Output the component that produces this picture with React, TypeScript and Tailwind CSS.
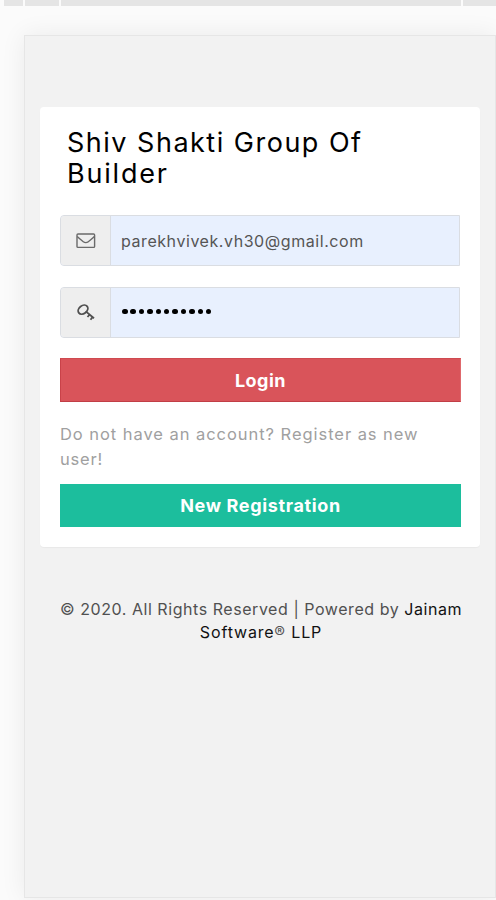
import type { ReactNode } from "react"

const MailIcon = () => (
  <svg width="20" height="16" viewBox="0 0 20 16" fill="none" stroke="#6a6a6a" strokeWidth="1.4">
    <rect x="1" y="1" width="17.6" height="13.4" rx="1" />
    <path d="M1.2 3.6c2 2 4 3.5 6.1 5.1 1.9 1.4 3.1 1.4 5 0 2.1-1.6 4.1-3.1 6.1-5.1" />
  </svg>
)

const KeyIcon = () => (
  <svg width="18" height="18" viewBox="0 0 18 18" fill="none" stroke="#505050" strokeWidth="1.8">
    <ellipse cx="6" cy="5.6" rx="5.3" ry="3.9" transform="rotate(-38 6 5.6)" />
    <path d="M8.800 7.400l8.200 6.800M12.600 10.600l-2.100 2.400M15.600 13.100l-2.100 2.600" />
  </svg>
)

const Field = ({ icon, children }: { icon: ReactNode; children: ReactNode }) => (
  <div className="flex h-[51px] w-[400px] rounded-l border border-[#dadde2] bg-[#e8f0fe]">
    <div className="flex w-[50px] shrink-0 items-center justify-center rounded-l-[3px] border-r border-[#dadde2] bg-[#eeeeee]">
      {icon}
    </div>
    <div className="flex flex-1 items-center pl-[10px]">{children}</div>
  </div>
)

export default function App() {
  return (
    <div className="h-[900px] w-[496px] overflow-hidden bg-[#fbfbfb] font-['Inter',sans-serif]">
      <div className="flex h-[6px] gap-[2px] pl-1">
        <div className="w-[19px] bg-[#e5e5e5]" />
        <div className="w-[34px] bg-[#e5e5e5]" />
        <div className="w-[400px] bg-[#e5e5e5]" />
        <div className="flex-1 bg-[#e5e5e5]" />
      </div>

      <div className="mt-[29px] ml-6 h-[863px] w-[472px] border border-[#e6e6e6] bg-[#f2f2f2] px-[15px] pt-[71px] shadow-[0_0_24px_rgba(0,0,0,0.07)]">
        <div className="h-[440px] w-[440px] rounded bg-white px-5 pt-[20px] shadow-[0_1px_1px_rgba(0,0,0,0.04)]">
          <h1 className="pl-[7px] text-[27px] leading-[31px] font-normal text-black">
            <span className="block whitespace-nowrap tracking-[1.5px]">Shiv Shakti Group Of</span>
            <span className="block tracking-[1.8px]">Builder</span>
          </h1>

          <div className="mt-[26px] flex flex-col gap-[21px]">
            <Field icon={<MailIcon />}>
              <span className="text-[16px] tracking-[0.56px] whitespace-nowrap text-[#555]">parekhvivek.vh30@gmail.com</span>
            </Field>
            <Field icon={<KeyIcon />}>
              <div className="flex -translate-y-px gap-[2.9px] pl-px">
                {Array.from({ length: 11 }, (_, i) => (
                  <span key={i} className="size-[5.5px] rounded-full bg-black" />
                ))}
              </div>
            </Field>
          </div>

          <button className="mt-5 flex h-[44px] w-[401px] items-center justify-center border border-t-[#cf4a50] border-r-[#df686c] border-b-[#c13e46] border-l-[#c94249] bg-[#d9545a] text-[18px] font-bold tracking-[0.5px] text-white">
            Login
          </button>

          <p className="mt-5 text-[16.5px] leading-[25px] text-[#a0a0a0]">
            <span className="block whitespace-nowrap tracking-[0.95px]">Do not have an account? Register as new</span>
            <span className="block tracking-[0.8px]">user!</span>
          </p>

          <button className="mt-3 flex h-[43px] w-[401px] items-center justify-center bg-[#1cbe9d] text-[18px] font-bold tracking-[0.65px] text-white">
            New Registration
          </button>
        </div>

        <p className="mt-[51px] w-[442px] text-center text-[16px] leading-[23px] text-[#505050]">
          <span className="block whitespace-nowrap tracking-[0.55px]">
            © 2020. All Rights Reserved | Powered by <span className="text-[#111]">Jainam</span>
          </span>
          <span className="block tracking-[0.85px] text-[#111]">
            Software<span className="text-[#555]">®</span> LLP
          </span>
        </p>
      </div>
    </div>
  )
}
